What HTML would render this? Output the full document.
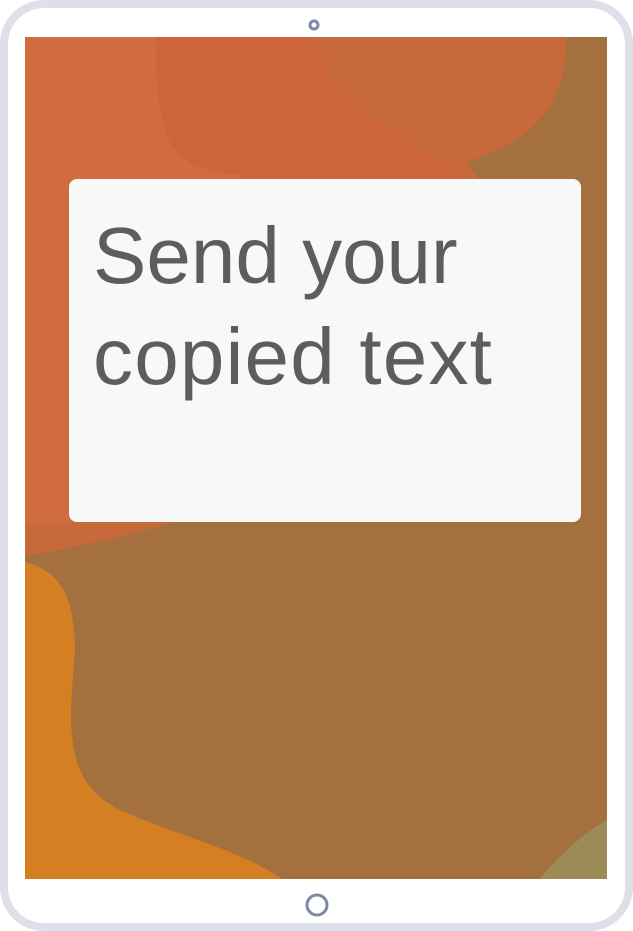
<!DOCTYPE html>
<html><head><style>
html,body{margin:0;padding:0;width:633px;height:931px;overflow:hidden;background:#fff}
.card{position:absolute;left:69px;top:179px;width:512px;height:343px;background:#f7f8f7;border-radius:8px}
.t{position:absolute;left:93px;top:205px;font-family:"Liberation Sans",sans-serif;font-size:80px;line-height:101px;color:#5c5e5d;white-space:nowrap;letter-spacing:0px}
.t span{letter-spacing:1.2px}
</style></head><body>
<svg width="633" height="931" style="position:absolute;left:0;top:0">
<rect x="4" y="4" width="625" height="923" rx="40" fill="#fff" stroke="#dde0e8" stroke-width="8"/>
<clipPath id="c"><rect x="25" y="37" width="582" height="842"/></clipPath>
<g clip-path="url(#c)">
<rect x="25" y="37" width="582" height="842" fill="#a4703e"/>
<path d="M25,37 H566 C566,100 540,140 465,162 L520,230 C480,400 300,510 25,556 Z" fill="#c7693b"/>
<path d="M155,37 H315 C330,110 400,130 480,190 L480,300 L150,300 Z" fill="#cd6539"/>
<path d="M25,37 H155 C158,150 170,168 240,175 L240,300 L150,420 L69,524 L25,522 Z" fill="#d16c3e"/>
<path d="M25,562 C55,570 75,590 75,650 C70,720 60,780 120,810 C190,840 240,850 282,879 H25 Z" fill="#d37f22"/>
<path d="M607,820 C580,835 555,860 540,879 H607 Z" fill="#9c8a57"/>
</g>
<circle cx="314" cy="25" r="4" fill="none" stroke="#7d89a6" stroke-width="3"/>
<circle cx="317" cy="905" r="10" fill="none" stroke="#7d89a6" stroke-width="3"/>
</svg>
<div class="card"></div>
<div class="t">Send your<br><span>copied text</span></div>
</body></html>
